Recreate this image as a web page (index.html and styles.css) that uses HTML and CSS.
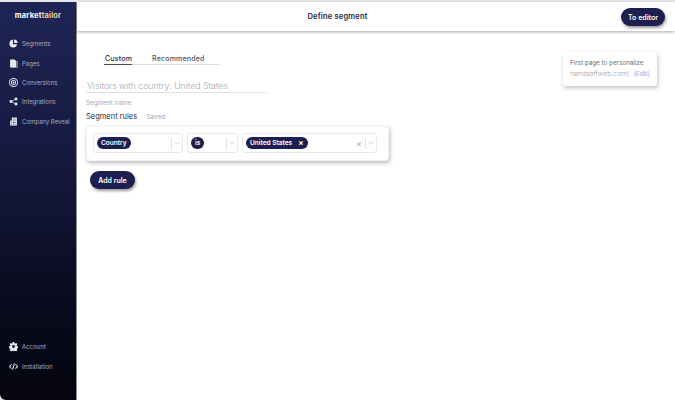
FILE: index.html
```html
<!DOCTYPE html>
<html lang="en">
<head>
<meta charset="utf-8">
<title>Define segment</title>
<link rel="stylesheet" href="styles.css">
</head>
<body>
<div class="app">
  <aside class="sidebar">
    <div class="logo">market<span class="logo-accent">tailor</span></div>
    <nav class="nav">
      <a class="nav-item"><svg class="ico" viewBox="0 0 16 16"><path d="M7 1.500a6.800 6.800 0 1 0 7.300 7.800H7z"/><path d="M9 .8v6.400h6.300A6.600 6.600 0 0 0 9 .8z"/></svg>Segments</a>
      <a class="nav-item"><svg class="ico" viewBox="0 0 16 16"><path d="M2 1h8l3 3v11H2z"/><path d="M14 4h1v12H5v-.6h9z"/></svg>Pages</a>
      <a class="nav-item"><svg class="ico" viewBox="0 0 16 16"><path fill-rule="evenodd" d="M8 0a8 8 0 1 1 0 16A8 8 0 0 1 8 0zm0 1.600a6.400 6.400 0 1 0 0 12.800A6.400 6.400 0 0 0 8 1.600zM8 3.500a4.500 4.500 0 1 1 0 9 4.500 4.500 0 0 1 0-9zm0 1.500a3 3 0 1 0 0 6 3 3 0 0 0 0-6zM8 6.300a1.700 1.700 0 1 1 0 3.400 1.700 1.700 0 0 1 0-3.400z"/></svg>Conversions</a>
      <a class="nav-item"><svg class="ico" viewBox="0 0 16 16"><circle cx="3.500" cy="8" r="2.600"/><circle cx="12.500" cy="3.500" r="2.600"/><circle cx="12.500" cy="12.500" r="2.600"/><path d="M3.500 8l9-4.500M3.500 8l9 4.500" stroke="#e8e9f0" stroke-width="1.300" fill="none"/></svg>Integrations</a>
      <a class="nav-item"><svg class="ico" viewBox="0 0 16 16"><path fill-rule="evenodd" d="M5 1h9v14H2V6h3zm2 2v1.500h1.500V3zm3 0v1.500h1.500V3zM7 6v1.500h1.500V6zm3 0v1.500h1.500V6zM4 8v1.500h1.500V8zm6 1v1.500h1.500V9zM7 9v1.500h1.500V9zm-3 2.500V13h1.500v-1.500zm3 .5v1.500h1.500V12zm3 0v1.500h1.500V12z"/></svg>Company Reveal</a>
    </nav>
    <nav class="nav nav-bottom">
      <a class="nav-item"><svg class="ico" viewBox="0 0 16 16"><path fill-rule="evenodd" d="M6.600 0h2.800l.4 2.200 1.200.6 2-1 2 2.400-1.400 1.700.4 1.300 2 .9v2.800l-2 .9-.4 1.300 1.400 1.700-2 2.200-2-1-1.200.6-.4 2.200H6.600l-.4-2.200-1.200-.6-2 1-2-2.200 1.400-1.700-.4-1.300-2-.9V7.900l2-.9.4-1.300L1 4l2-2.200 2 1 1.200-.6zM8 5.400a2.600 2.600 0 1 0 0 5.200 2.600 2.600 0 0 0 0-5.200z"/></svg>Account</a>
      <a class="nav-item"><svg class="ico" viewBox="0 0 16 16"><path d="M4.500 4L1 8l3.500 4M11.500 4L15 8l-3.500 4M9.500 2.500l-3 11" fill="none" stroke="#e8e9f0" stroke-width="1.800"/></svg>Installation</a>
    </nav>
  </aside>
  <div class="main">
    <header class="topbar">
      <h1 class="title">Define segment</h1>
      <button class="btn btn-editor">To editor</button>
    </header>
    <div class="content">
      <section class="form">
        <div class="tabs">
          <span class="tab tab-active">Custom</span>
          <span class="tab">Recommended</span>
        </div>
        <div class="name-value">Visitors with country: United States</div>
        <div class="name-label">Segment name</div>
        <div class="rules-head"><span class="rules-title">Segment rules</span><span class="rules-saved">Saved</span></div>
        <div class="rule-card">
          <div class="select select-a">
            <span class="chip">Country</span>
            <span class="sel-tools"><span class="sep"></span><svg class="chev" viewBox="0 0 10 6"><path d="M1 1l4 4 4-4"/></svg></span>
          </div>
          <div class="select select-b">
            <span class="chip">is</span>
            <span class="sel-tools"><span class="sep"></span><svg class="chev" viewBox="0 0 10 6"><path d="M1 1l4 4 4-4"/></svg></span>
          </div>
          <div class="select select-c">
            <span class="chip">United States<span class="chip-x">×</span></span>
            <span class="sel-tools"><span class="clear">×</span><span class="sep"></span><svg class="chev" viewBox="0 0 10 6"><path d="M1 1l4 4 4-4"/></svg></span>
          </div>
        </div>
        <button class="btn btn-add">Add rule</button>
      </section>
      <aside class="page-card">
        <div class="page-title">First page to personalize</div>
        <div class="page-row"><span class="page-url">handsoffweb.com/</span><a class="page-edit">(Edit)</a></div>
      </aside>
    </div>
  </div>
</div>
</body>
</html>
```
FILE: styles.css
```css
* { box-sizing: border-box; }
html, body { margin: 0; height: 100%; background: #fff; }
body { font-family: "Inter", "Liberation Sans", sans-serif; overflow: hidden; }
.app { display: flex; height: 400px; padding-top: 2px; background: #e9e9ec; }
.sidebar {
  width: 77px; flex: none; display: flex; flex-direction: column;
  background: linear-gradient(180deg, #1f2555 0%, #171b42 35%, #090b1e 75%, #04050f 100%);
  border-right: 1px solid #8a8b93; border-radius: 0 0 0 6px;
  padding: 2px 0 0;
}
.logo { font: 700 7.500px/1 "Inter", sans-serif; color: #fff; text-align: center; padding: 8px 0 0; height: 30px; letter-spacing: .2px; }
.logo-accent { color: #f3e3b8; font-weight: 600; }
.nav { display: flex; flex-direction: column; }
.nav-item { display: flex; align-items: center; gap: 4px; height: 19.400px; padding-left: 9px; font-size: 6px; color: #a9abbc; white-space: nowrap; }
.nav-bottom { margin-top: auto; padding-bottom: 24px; }
.ico { width: 9px; height: 9px; flex: none; fill: #e8e9f0; }
.main { flex: 1; display: flex; flex-direction: column; min-width: 0; background: #fff; }
.topbar {
  height: 29px; flex: none; display: flex; align-items: center; justify-content: center; position: relative;
  background: #fff; box-shadow: 0 1px 3px rgba(0,0,0,.35);
}
.title { margin: 0; padding-right: 77px; font-size: 7.500px; font-weight: 600; color: #23243a; letter-spacing: .2px; }
.btn { border: 0; border-radius: 10px; background: #1c1f4f; color: #fff; font: 600 7px/1 "Inter", sans-serif; box-shadow: 1px 2px 3px rgba(0,0,0,.4); }
.btn-editor { position: absolute; right: 10px; top: 6px; width: 44px; height: 18px; }
.content { flex: 1; display: flex; justify-content: space-between; padding: 21px 18px 0 9px; }
.form { width: 304px; display: flex; flex-direction: column; align-items: flex-start; }
.tabs { display: flex; width: 116px; margin: 2px 0 0 18px; border-bottom: 1px solid #dcdce2; height: 11px; }
.tab { font-size: 7px; line-height: 9px; font-weight: 500; color: #50515f; letter-spacing: .2px; height: 11px; margin-right: 20px; white-space: nowrap; }
.tab-active { color: #2a2b3d; border-bottom: 1px solid #4a4b58; width: 32px; padding-left: 1px; }
.name-value { width: 181px; margin-top: 15px; height: 13px; border-bottom: 1px solid #e2e2e6; font-size: 8.700px; line-height: 13px; color: #a6a7ad; font-weight: 300; padding-left: 1px; white-space: nowrap; }
.name-label { margin-top: 6px; font-size: 6.400px; line-height: 8px; color: #a9aab0; }
.rules-head { display: flex; gap: 9px; align-items: baseline; margin-top: 5px; }
.rules-title { font-size: 7.500px; line-height: 9px; color: #2c2d3c; }
.rules-saved { font-size: 6.500px; color: #a9aab0; }
.rule-card { width: 303px; height: 35px; margin-top: 5px; padding: 6px 11px 0 6px; display: flex; gap: 4px; background: #fff; border-radius: 4px; box-shadow: 1px 2px 4px rgba(0,0,0,.28); border: 1px solid #f3f3f5; align-items: flex-start; }
.select { height: 20px; display: flex; align-items: center; justify-content: space-between; padding-left: 3px; border: 1px solid #e9e9ec; border-radius: 3px; }
.select-a { width: 90px; }
.select-b { width: 51px; }
.select-c { width: 135px; }
.chip { display: inline-flex; align-items: center; height: 12px; padding: 0 4px; border-radius: 6px; background: #1c1f4f; color: #fff; font-size: 6.500px; font-weight: 600; white-space: nowrap; }
.chip-x { margin-left: 6px; font-size: 8px; line-height: 1; font-weight: 700; }
.sel-tools { display: flex; align-items: center; height: 100%; }
.sep { width: 1px; height: 11px; background: #dedee2; }
.chev { width: 6px; height: 4px; margin: 0 2px; fill: none; stroke: #b9b9bf; stroke-width: 1; }
.clear { color: #b5b5ba; font-size: 10px; line-height: 1; margin-right: 3px; }
.btn-add { margin: 10px 0 0 4px; width: 45px; height: 18px; }
.page-card { width: 94px; height: 34px; padding: 7px 0 0 7px; border-radius: 3px; background: #fff; box-shadow: 1px 2px 4px rgba(0,0,0,.25); }
.page-title { font-size: 6.300px; line-height: 8px; color: #6b6c78; white-space: nowrap; }
.page-row { display: flex; gap: 4px; margin-top: 2px; align-items: baseline; white-space: nowrap; }
.page-url { font-size: 6.800px; color: #a0a1a8; font-weight: 300; }
.page-edit { font-size: 6.500px; color: #9aa6ea; }
```
